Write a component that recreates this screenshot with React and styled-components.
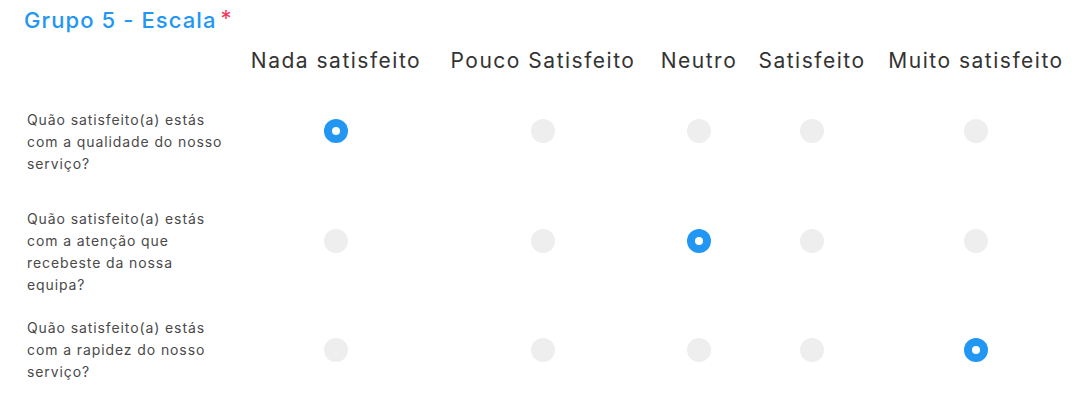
import React, { useState } from 'react';
import styled, { createGlobalStyle } from 'styled-components';

const GlobalStyle = createGlobalStyle`
    html, body {
        margin: 0;
        padding: 0;
        background: #ffffff;
    }

    body {
        font-family: Inter, 'Open Sans', sans-serif;
    }
`;

const COLUMNS = '221px 196px 218px 94px 132px 196px';

const StyledScale = styled.div`
    width: 1084px;
    height: 409px;
    box-sizing: border-box;
    padding: 5px 0 0 17px;
    overflow: hidden;
`;

const Title = styled.div`
    height: 30px;
    padding-left: 7px;
    display: flex;
    align-items: center;
    font-size: 22px;
    font-weight: 500;
    color: #2196f3;
    letter-spacing: 1.1px;

    .required {
        color: #f5365c;
        font-size: 22px;
        font-weight: 400;
        margin-left: 4px;
        align-self: flex-start;
        line-height: 26px;
    }
`;

const HeaderRow = styled.div`
    display: grid;
    grid-template-columns: ${COLUMNS};
    margin-top: 14px;
    height: 24px;
`;

const HeaderCell = styled.div`
    display: flex;
    justify-content: center;
    align-items: center;
    white-space: nowrap;
    font-size: 21px;
    line-height: 24px;
    color: #333333;
    letter-spacing: 1.5px;
`;

const Body = styled.div`
    margin-top: 36px;
`;

const QuestionRow = styled.div`
    display: grid;
    grid-template-columns: ${COLUMNS};
    padding-bottom: ${props => props.gap}px;
`;

const Question = styled.div`
    padding-left: 10px;
    font-size: 14px;
    line-height: 22px;
    color: #4a4a4a;
    letter-spacing: 0.9px;

    span {
        display: block;
        white-space: nowrap;
    }
`;

const OptionCell = styled.div`
    display: flex;
    justify-content: center;
    align-items: flex-start;
    padding-top: ${props => props.offset}px;
`;

const Radio = styled.button`
    width: 24px;
    height: 24px;
    padding: 0;
    border: none;
    border-radius: 50%;
    cursor: pointer;
    display: flex;
    justify-content: center;
    align-items: center;
    background-color: ${props => props.checked ? '#2196f3' : '#eeeeee'};

    &::after {
        content: '';
        width: 8px;
        height: 8px;
        border-radius: 50%;
        background-color: #ffffff;
        display: ${props => props.checked ? 'block' : 'none'};
    }
`;

const options = ['Nada satisfeito', 'Pouco Satisfeito', 'Neutro', 'Satisfeito', 'Muito satisfeito'];

const questions = [
    { id: 'qualidade', lines: ['Quão satisfeito(a) estás', 'com a qualidade do nosso', 'serviço?'], answer: 0, offset: 10, gap: 33 },
    { id: 'atencao', lines: ['Quão satisfeito(a) estás', 'com a atenção que', 'recebeste da nossa', 'equipa?'], answer: 2, offset: 21, gap: 21 },
    { id: 'rapidez', lines: ['Quão satisfeito(a) estás', 'com a rapidez do nosso', 'serviço?'], answer: 4, offset: 21, gap: 22 },
];

const App = () => {

    const [answers, setAnswers] = useState(
        questions.reduce((acc, q) => ({ ...acc, [q.id]: q.answer }), {})
    );

    return (
        <StyledScale>
            <GlobalStyle />
            <Title>
                Grupo 5 - Escala<span className='required'>*</span>
            </Title>
            <HeaderRow>
                <div />
                {options.map(option => (
                    <HeaderCell key={option}>{option}</HeaderCell>
                ))}
            </HeaderRow>
            <Body>
                {questions.map(q => (
                    <QuestionRow key={q.id} gap={q.gap}>
                        <Question>
                            {q.lines.map(line => <span key={line}>{line}</span>)}
                        </Question>
                        {options.map((option, i) => (
                            <OptionCell key={option} offset={q.offset}>
                                <Radio
                                    type='button'
                                    aria-label={option}
                                    checked={answers[q.id] === i}
                                    onClick={() => setAnswers({ ...answers, [q.id]: i })}
                                />
                            </OptionCell>
                        ))}
                    </QuestionRow>
                ))}
            </Body>
        </StyledScale>
    );
}

export default App;
